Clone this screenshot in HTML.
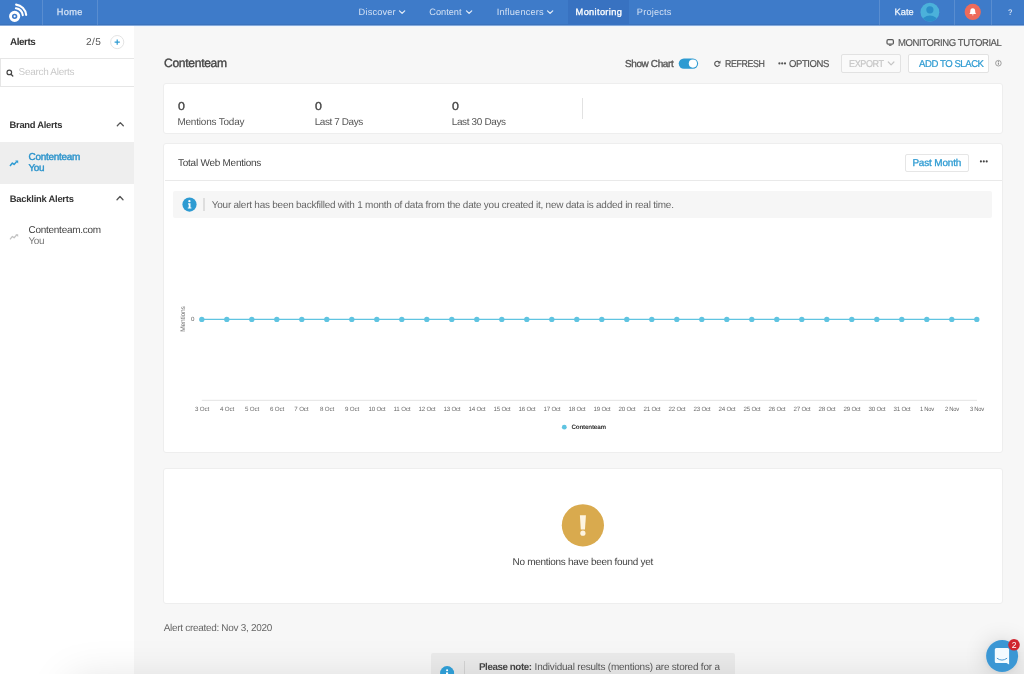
<!DOCTYPE html>
<html>
<head>
<meta charset="utf-8">
<title>Monitoring - Contenteam</title>
<style>
*{box-sizing:border-box;margin:0;padding:0}
html,body{width:1024px;height:674px;overflow:hidden;background:#f7f7f7;font-family:"Liberation Sans",sans-serif;color:#444}
.x{position:absolute;white-space:nowrap;line-height:1;font-family:"Liberation Sans",sans-serif;text-rendering:geometricPrecision}
.b{position:absolute}
#nav{left:0;top:0;width:1024px;height:25px;background:#3e7bc9;border-bottom:1px solid #3b73bc}
.sep{position:absolute;top:0;width:1.4px;height:25px;background:rgba(255,255,255,.14);margin-left:-.5px}
#navline{left:0;top:25px;width:1024px;height:1px;background:#85aadc}
#navline2{left:134px;top:26px;width:890px;height:1px;background:#eff6fc}
#side{left:0;top:26px;width:134px;height:648px;background:#fff}
.card{position:absolute;background:#fff;border:1px solid #eeeeee;border-radius:3px}
.btn{position:absolute;border:1px solid #e2e2e2;border-radius:2px;background:#fff}
#icons{position:absolute;left:0;top:0;width:1024px;height:674px}
#shade{left:70px;top:680px;width:1300px;height:200px;background:#ddd;box-shadow:0 0 40px rgba(0,0,0,.125)}
</style>
</head>
<body>
<div class="b" id="nav">
  <div class="sep" style="left:42px"></div>
  <div class="sep" style="left:97px"></div>
  <div class="b" style="left:567.5px;top:0;width:61.5px;height:25px;background:#3872c1"></div>
  <div class="sep" style="left:879px"></div>
  <div class="sep" style="left:954px"></div>
  <div class="sep" style="left:991px"></div>
</div>
<div class="b" id="navline"></div><div class="b" id="navline2"></div>
<div class="b" id="side">
  <div class="b" style="left:0;top:31.8px;width:134px;height:29.2px;border:1px solid #e6e6e6;border-right:0"></div>
  <div class="b" style="left:0;top:116px;width:134px;height:41.5px;background:#eeeeee"></div>
</div>

<div class="card" style="left:163px;top:82.6px;width:840px;height:51.2px"></div>
<div class="b" style="left:582px;top:98px;width:1px;height:20.5px;background:#e2e2e2"></div>

<div class="card" style="left:163px;top:143.2px;width:840px;height:310.2px"></div>
<div class="b" style="left:164.5px;top:179.6px;width:837.5px;height:1px;background:#e9e9e9"></div>
<div class="b" style="left:173.3px;top:190.7px;width:818.9px;height:27.8px;background:#f6f6f6;border-radius:2px"></div>
<div class="b" style="left:203.3px;top:197.8px;width:1.3px;height:13.4px;background:#dedede"></div>

<div class="card" style="left:163px;top:467.5px;width:840px;height:136.8px"></div>

<div class="btn" style="left:841.2px;top:54.4px;width:60px;height:19px;background:#fafafa"></div>
<div class="btn" style="left:908.4px;top:54.4px;width:80.3px;height:19px"></div>
<div class="btn" style="left:905.3px;top:153.8px;width:63.4px;height:18.2px;border-color:#e6e6e6"></div>

<div class="b" style="left:431px;top:652.6px;width:303.8px;height:30px;background:#ebebeb;border-radius:2px"></div>
<div class="b" style="left:464px;top:661px;width:1px;height:20px;background:#d4d4d4"></div>

<div class="b" id="shade"></div>
<div class="b" style="left:986.1px;top:640px;width:32px;height:32px;border-radius:50%;box-shadow:0 .7px 4px rgba(0,0,0,.06),0 1.4px 23px rgba(0,0,0,.16)"></div>

<div class="b" id="txt" style="left:0;top:0;width:1024px;height:674px;will-change:transform">
<span class="x" id="t0" style="left:56.70px;top:8.00px;font-size:9.24px;color:#d3e1f4;letter-spacing:0.320px;-webkit-text-stroke:.25px #d3e1f4;">Home</span>
<span class="x" id="t1" style="left:358.60px;top:8.00px;font-size:9.24px;color:#d3e1f4;letter-spacing:0.168px;">Discover</span>
<span class="x" id="t2" style="left:429.30px;top:8.00px;font-size:9.24px;color:#d3e1f4;letter-spacing:-0.031px;">Content</span>
<span class="x" id="t3" style="left:496.80px;top:8.00px;font-size:9.24px;color:#d3e1f4;letter-spacing:0.173px;">Influencers</span>
<span class="x" id="t4" style="left:575.60px;top:8.00px;font-size:9.24px;color:#ffffff;letter-spacing:0.342px;-webkit-text-stroke:.3px #fff;">Monitoring</span>
<span class="x" id="t5" style="left:636.80px;top:8.00px;font-size:9.24px;color:#d3e1f4;letter-spacing:0.177px;">Projects</span>
<span class="x" id="t6" style="left:894.50px;top:8.00px;font-size:9.24px;color:#eef4fb;letter-spacing:0.067px;-webkit-text-stroke:.25px #eef4fb;">Kate</span>
<span class="x" id="t7" style="left:1007.50px;top:8.00px;font-size:8.3px;color:#cfdef3;font-weight:700;transform:scaleX(0.8862);transform-origin:0 0;">?</span>
<span class="x" id="t8" style="left:164.00px;top:57.00px;font-size:12.1px;color:#444;letter-spacing:-0.310px;-webkit-text-stroke:.35px #444;">Contenteam</span>
<span class="x" id="t9" style="left:897.60px;top:39.00px;font-size:9.96px;color:#555;letter-spacing:-0.448px;transform:scaleX(0.9614);transform-origin:0 0;-webkit-text-stroke:.15px #555;">MONITORING TUTORIAL</span>
<span class="x" id="t10" style="left:625.00px;top:60.00px;font-size:9.96px;color:#555;letter-spacing:-0.368px;-webkit-text-stroke:.35px #555;">Show Chart</span>
<span class="x" id="t11" style="left:724.50px;top:60.00px;font-size:9.96px;color:#555;letter-spacing:-0.448px;transform:scaleX(0.8869);transform-origin:0 0;-webkit-text-stroke:.2px #555;">REFRESH</span>
<span class="x" id="t12" style="left:789.00px;top:60.00px;font-size:9.96px;color:#555;letter-spacing:-0.448px;transform:scaleX(0.9571);transform-origin:0 0;-webkit-text-stroke:.2px #555;">OPTIONS</span>
<span class="x" id="t13" style="left:849.00px;top:60.00px;font-size:9.96px;color:#c6c6c6;letter-spacing:-0.448px;transform:scaleX(0.9115);transform-origin:0 0;-webkit-text-stroke:.2px #c6c6c6;">EXPORT</span>
<span class="x" id="t14" style="left:918.50px;top:60.00px;font-size:9.96px;color:#2e9bd2;letter-spacing:-0.448px;transform:scaleX(0.9597);transform-origin:0 0;-webkit-text-stroke:.22px #2e9bd2;">ADD TO SLACK</span>
<span class="x" id="t15" style="left:178.00px;top:102.00px;font-size:11.4px;color:#444;transform:scaleX(1.0877);transform-origin:0 0;-webkit-text-stroke:.35px #444;">0</span>
<span class="x" id="t16" style="left:315.20px;top:102.00px;font-size:11.4px;color:#444;transform:scaleX(1.0877);transform-origin:0 0;-webkit-text-stroke:.35px #444;">0</span>
<span class="x" id="t17" style="left:451.70px;top:102.00px;font-size:11.4px;color:#444;transform:scaleX(1.0877);transform-origin:0 0;-webkit-text-stroke:.35px #444;">0</span>
<span class="x" id="t18" style="left:177.40px;top:118.00px;font-size:9.96px;color:#555;letter-spacing:-0.187px;">Mentions Today</span>
<span class="x" id="t19" style="left:314.72px;top:118.00px;font-size:9.96px;color:#555;letter-spacing:-0.406px;">Last 7 Days</span>
<span class="x" id="t20" style="left:451.70px;top:118.00px;font-size:9.96px;color:#555;letter-spacing:-0.336px;">Last 30 Days</span>
<span class="x" id="t21" style="left:178.00px;top:159.00px;font-size:9.96px;color:#444;letter-spacing:-0.231px;">Total Web Mentions</span>
<span class="x" id="t22" style="left:912.40px;top:159.00px;font-size:9.96px;color:#2e9bd2;letter-spacing:-0.162px;-webkit-text-stroke:.3px #2e9bd2;">Past Month</span>
<span class="x" id="t23" style="left:211.80px;top:201.00px;font-size:9.96px;color:#666;letter-spacing:-0.223px;">Your alert has been backfilled with 1 month of data from the date you created it, new data is added in real time.</span>
<span class="x" id="t24" style="left:191.00px;top:317.00px;font-size:6.2px;color:#666;">0</span>
<span class="x" id="t25" style="left:194.90px;top:407.00px;font-size:6.2px;color:#6a6a6a;letter-spacing:-0.124px;">3 Oct</span>
<span class="x" id="t26" style="left:219.90px;top:407.00px;font-size:6.2px;color:#6a6a6a;letter-spacing:-0.124px;">4 Oct</span>
<span class="x" id="t27" style="left:244.90px;top:407.00px;font-size:6.2px;color:#6a6a6a;letter-spacing:-0.124px;">5 Oct</span>
<span class="x" id="t28" style="left:269.90px;top:407.00px;font-size:6.2px;color:#6a6a6a;letter-spacing:-0.124px;">6 Oct</span>
<span class="x" id="t29" style="left:294.24px;top:407.00px;font-size:6.2px;color:#6a6a6a;letter-spacing:-0.124px;">7 Oct</span>
<span class="x" id="t30" style="left:319.90px;top:407.00px;font-size:6.2px;color:#6a6a6a;letter-spacing:-0.124px;">8 Oct</span>
<span class="x" id="t31" style="left:344.90px;top:407.00px;font-size:6.2px;color:#6a6a6a;letter-spacing:-0.124px;">9 Oct</span>
<span class="x" id="t32" style="left:368.55px;top:407.00px;font-size:6.2px;color:#6a6a6a;letter-spacing:-0.247px;">10 Oct</span>
<span class="x" id="t33" style="left:393.55px;top:407.00px;font-size:6.2px;color:#6a6a6a;letter-spacing:-0.156px;">11 Oct</span>
<span class="x" id="t34" style="left:418.55px;top:407.00px;font-size:6.2px;color:#6a6a6a;letter-spacing:-0.247px;">12 Oct</span>
<span class="x" id="t35" style="left:443.55px;top:407.00px;font-size:6.2px;color:#6a6a6a;letter-spacing:-0.247px;">13 Oct</span>
<span class="x" id="t36" style="left:468.55px;top:407.00px;font-size:6.2px;color:#6a6a6a;letter-spacing:-0.247px;">14 Oct</span>
<span class="x" id="t37" style="left:493.55px;top:407.00px;font-size:6.2px;color:#6a6a6a;letter-spacing:-0.247px;">15 Oct</span>
<span class="x" id="t38" style="left:518.55px;top:407.00px;font-size:6.2px;color:#6a6a6a;letter-spacing:-0.247px;">16 Oct</span>
<span class="x" id="t39" style="left:543.55px;top:407.00px;font-size:6.2px;color:#6a6a6a;letter-spacing:-0.247px;">17 Oct</span>
<span class="x" id="t40" style="left:568.55px;top:407.00px;font-size:6.2px;color:#6a6a6a;letter-spacing:-0.247px;">18 Oct</span>
<span class="x" id="t41" style="left:593.55px;top:407.00px;font-size:6.2px;color:#6a6a6a;letter-spacing:-0.247px;">19 Oct</span>
<span class="x" id="t42" style="left:618.55px;top:407.00px;font-size:6.2px;color:#6a6a6a;letter-spacing:-0.247px;">20 Oct</span>
<span class="x" id="t43" style="left:643.55px;top:407.00px;font-size:6.2px;color:#6a6a6a;letter-spacing:-0.247px;">21 Oct</span>
<span class="x" id="t44" style="left:668.55px;top:407.00px;font-size:6.2px;color:#6a6a6a;letter-spacing:-0.247px;">22 Oct</span>
<span class="x" id="t45" style="left:693.55px;top:407.00px;font-size:6.2px;color:#6a6a6a;letter-spacing:-0.247px;">23 Oct</span>
<span class="x" id="t46" style="left:718.55px;top:407.00px;font-size:6.2px;color:#6a6a6a;letter-spacing:-0.247px;">24 Oct</span>
<span class="x" id="t47" style="left:743.55px;top:407.00px;font-size:6.2px;color:#6a6a6a;letter-spacing:-0.247px;">25 Oct</span>
<span class="x" id="t48" style="left:768.55px;top:407.00px;font-size:6.2px;color:#6a6a6a;letter-spacing:-0.247px;">26 Oct</span>
<span class="x" id="t49" style="left:793.55px;top:407.00px;font-size:6.2px;color:#6a6a6a;letter-spacing:-0.247px;">27 Oct</span>
<span class="x" id="t50" style="left:818.55px;top:407.00px;font-size:6.2px;color:#6a6a6a;letter-spacing:-0.247px;">28 Oct</span>
<span class="x" id="t51" style="left:843.55px;top:407.00px;font-size:6.2px;color:#6a6a6a;letter-spacing:-0.247px;">29 Oct</span>
<span class="x" id="t52" style="left:868.55px;top:407.00px;font-size:6.2px;color:#6a6a6a;letter-spacing:-0.247px;">30 Oct</span>
<span class="x" id="t53" style="left:893.55px;top:407.00px;font-size:6.2px;color:#6a6a6a;letter-spacing:-0.247px;">31 Oct</span>
<span class="x" id="t54" style="left:919.90px;top:407.00px;font-size:6.2px;color:#6a6a6a;letter-spacing:-0.279px;transform:scaleX(0.9498);transform-origin:0 0;">1 Nov</span>
<span class="x" id="t55" style="left:944.90px;top:407.00px;font-size:6.2px;color:#6a6a6a;letter-spacing:-0.279px;transform:scaleX(0.9498);transform-origin:0 0;">2 Nov</span>
<span class="x" id="t56" style="left:969.90px;top:407.00px;font-size:6.2px;color:#6a6a6a;letter-spacing:-0.279px;transform:scaleX(0.9498);transform-origin:0 0;">3 Nov</span>
<span class="x" id="t57" style="left:571.40px;top:425.00px;font-size:6.3px;color:#333;font-weight:700;letter-spacing:-0.188px;">Contenteam</span>
<span class="x" id="t58" style="left:512.60px;top:558.00px;font-size:9.96px;color:#444;letter-spacing:-0.275px;">No mentions have been found yet</span>
<span class="x" id="t59" style="left:163.70px;top:624.00px;font-size:9.96px;color:#666;letter-spacing:-0.286px;">Alert created: Nov 3, 2020</span>
<span class="x" id="t60" style="left:479.40px;top:663.00px;font-size:9.96px;color:#444;font-weight:700;letter-spacing:-0.448px;transform:scaleX(0.9868);transform-origin:0 0;">Please note:</span>
<span class="x" id="t61" style="left:534.60px;top:663.00px;font-size:9.96px;color:#555;letter-spacing:-0.195px;">Individual results (mentions) are stored for a</span>
<span class="x" id="t62" style="left:9.60px;top:38.00px;font-size:9.96px;color:#333;font-weight:700;letter-spacing:-0.448px;transform:scaleX(0.9932);transform-origin:0 0;">Alerts</span>
<span class="x" id="t63" style="left:86.10px;top:38.00px;font-size:9.96px;color:#555;letter-spacing:0.448px;transform:scaleX(1.0108);transform-origin:0 0;">2/5</span>
<span class="x" id="t64" style="left:18.56px;top:68.00px;font-size:9.96px;color:#c9c9c9;letter-spacing:-0.275px;">Search Alerts</span>
<span class="x" id="t65" style="left:9.60px;top:120.00px;font-size:9.4px;color:#333;font-weight:700;letter-spacing:-0.284px;">Brand Alerts</span>
<span class="x" id="t66" style="left:28.50px;top:153.00px;font-size:9.96px;color:#2b93cb;letter-spacing:-0.270px;-webkit-text-stroke:.4px #2b93cb;">Contenteam</span>
<span class="x" id="t67" style="left:28.50px;top:164.00px;font-size:9.96px;color:#2b93cb;letter-spacing:-0.398px;-webkit-text-stroke:.4px #2b93cb;">You</span>
<span class="x" id="t68" style="left:9.80px;top:194.00px;font-size:9.4px;color:#333;font-weight:700;letter-spacing:-0.236px;">Backlink Alerts</span>
<span class="x" id="t69" style="left:28.50px;top:226.00px;font-size:9.96px;color:#444;letter-spacing:-0.246px;">Contenteam.com</span>
<span class="x" id="t70" style="left:28.50px;top:237.00px;font-size:9.96px;color:#777;letter-spacing:-0.398px;">You</span>
<span class="x" style="left:184.2px;top:319.3px;font-size:6.7px;color:#6e6e6e;transform:translate(-50%,-50%) rotate(-90deg);letter-spacing:-.2px">Mentions</span>
</div>

<svg id="icons" viewBox="0 0 1024 674">
  <!-- logo -->
  <g fill="none" stroke="#fff" stroke-linecap="round">
    <circle cx="14.65" cy="16.35" r="4.15" stroke-width="2.9"/>
    <circle cx="14.65" cy="16.35" r="1.1" fill="#fff" stroke="none"/>
    <path d="M15.9 8.3 A8.2 8.2 0 0 1 22.8 15.2" stroke-width="2.1"/>
    <path d="M16.1 4.6 A11.6 11.6 0 0 1 26.2 14.9" stroke-width="2.1"/>
  </g>
  <!-- nav chevrons -->
  <g fill="none" stroke="#e3ecf8" stroke-width="1.3" stroke-linecap="round" stroke-linejoin="round">
    <path d="M399.5 10.9 l2.6 2.5 l2.6 -2.5"/>
    <path d="M466.5 10.9 l2.6 2.5 l2.6 -2.5"/>
    <path d="M547.5 10.9 l2.6 2.5 l2.6 -2.5"/>
  </g>
  <!-- avatar -->
  <defs><clipPath id="av"><circle cx="929.9" cy="12.2" r="9.4"/></clipPath></defs>
  <circle cx="929.9" cy="12.2" r="9.4" fill="#4bb1da"/>
  <g clip-path="url(#av)" fill="#2c8ec9">
    <circle cx="929.9" cy="9.8" r="3.6"/>
    <ellipse cx="929.9" cy="22.2" rx="8.2" ry="6.6"/>
  </g>
  <!-- bell -->
  <circle cx="972.75" cy="11.9" r="8.1" fill="#ee6b5b"/>
  <path transform="translate(972.75 11.7) scale(.82) translate(-972.75 -11.4)" d="M972.75 7.3 c-2.1 0 -3 1.6 -3 3.4 c0 1.8 -.5 2.7 -1.2 3.4 h8.4 c-.7 -.7 -1.2 -1.6 -1.2 -3.4 c0 -1.8 -.9 -3.4 -3 -3.4z M971.7 14.8 a1.05 1.05 0 0 0 2.1 0z" fill="#fff"/>

  <!-- sidebar plus -->
  <circle cx="117.2" cy="42.1" r="6.6" fill="#fff" stroke="#e3e3e3" stroke-width="1"/>
  <path d="M114.6 42.1h5.2M117.2 39.5v5.2" stroke="#2e9bd2" stroke-width="1.2" fill="none"/>
  <!-- search icon -->
  <circle cx="9.3" cy="72.4" r="2.3" fill="none" stroke="#484848" stroke-width="1.2"/>
  <path d="M11 74.2l1.8 1.8" stroke="#484848" stroke-width="1.3" stroke-linecap="round"/>
  <!-- sidebar chevrons -->
  <g fill="none" stroke="#555" stroke-width="1.3" stroke-linecap="round" stroke-linejoin="round">
    <path d="M117.3 125.8l3 -3.2l3 3.2"/>
    <path d="M117 199.7l3 -3.2l3 3.2"/>
  </g>
  <!-- trend icons -->
  <path d="M10 166l2.4 -2.9l1.7 1.3l2.6 -2.8" fill="none" stroke="#2e9bd2" stroke-width="1.5" stroke-linejoin="round"/>
  <path d="M15.2 160.6h3v3z" fill="#2e9bd2"/>
  <path d="M10 239.3l2.4 -2.9l1.7 1.3l2.6 -2.8" fill="none" stroke="#c2c2c2" stroke-width="1.3" stroke-linejoin="round"/>
  <path d="M15.4 234.2h2.8v2.8z" fill="#c2c2c2"/>

  <!-- monitor icon -->
  <rect x="887" y="39.7" width="6.4" height="4.5" rx="1.2" fill="none" stroke="#5a5a5a" stroke-width="1.25"/>
  <path d="M888.9 45.4h2.6" stroke="#5a5a5a" stroke-width=".9"/>
  <!-- toggle -->
  <rect x="678.7" y="58.4" width="19.4" height="10.3" rx="5.15" fill="#2e9bd2"/>
  <circle cx="692.9" cy="63.55" r="4.1" fill="#fff"/>
  <!-- refresh -->
  <path d="M719.4 62.6a2.5 2.5 0 1 0 .1 2.2" fill="none" stroke="#555" stroke-width="1.15"/>
  <path d="M720.5 60.6v2.8h-2.8z" fill="#555"/>
  <!-- options dots -->
  <g fill="#555"><circle cx="779.4" cy="63.4" r="1.1"/><circle cx="782.2" cy="63.4" r="1.1"/><circle cx="785" cy="63.4" r="1.1"/></g>
  <!-- export chevron -->
  <path d="M888.3 62l2.8 2.8l2.8 -2.8" fill="none" stroke="#c6c6c6" stroke-width="1.2" stroke-linecap="round" stroke-linejoin="round"/>
  <!-- small info -->
  <circle cx="998.4" cy="63.2" r="2.8" fill="none" stroke="#8a8a8a" stroke-width=".8"/>
  <path d="M998.4 62.6v2.1" stroke="#777" stroke-width=".9"/><circle cx="998.4" cy="61.6" r=".5" fill="#777"/>
  <!-- card menu dots -->
  <g fill="#444"><circle cx="980.9" cy="161.4" r="1.05"/><circle cx="983.8" cy="161.4" r="1.05"/><circle cx="986.7" cy="161.4" r="1.05"/></g>

  <!-- banner info -->
  <circle cx="189.5" cy="204.6" r="7.1" fill="#2e9bd2"/>
  <path d="M188.1 203.3h2.4v4.2h.9v1.1h-3.6v-1.1h.9v-3.1h-.6z" fill="#fff"/><circle cx="189.4" cy="201.2" r="1.15" fill="#fff"/>

  <!-- chart -->
  <path d="M201.8 400.3H977" stroke="#e3e3e3" stroke-width="1"/>
  <path d="M201.8 319.4H976.8" stroke="#5fc4e1" stroke-width="1.3"/>
  <g fill="#5fc4e1" id="pts"><circle cx="201.8" cy="319.4" r="2.65"/><circle cx="226.8" cy="319.4" r="2.65"/><circle cx="251.8" cy="319.4" r="2.65"/><circle cx="276.8" cy="319.4" r="2.65"/><circle cx="301.8" cy="319.4" r="2.65"/><circle cx="326.8" cy="319.4" r="2.65"/><circle cx="351.8" cy="319.4" r="2.65"/><circle cx="376.8" cy="319.4" r="2.65"/><circle cx="401.8" cy="319.4" r="2.65"/><circle cx="426.8" cy="319.4" r="2.65"/><circle cx="451.8" cy="319.4" r="2.65"/><circle cx="476.8" cy="319.4" r="2.65"/><circle cx="501.8" cy="319.4" r="2.65"/><circle cx="526.8" cy="319.4" r="2.65"/><circle cx="551.8" cy="319.4" r="2.65"/><circle cx="576.8" cy="319.4" r="2.65"/><circle cx="601.8" cy="319.4" r="2.65"/><circle cx="626.8" cy="319.4" r="2.65"/><circle cx="651.8" cy="319.4" r="2.65"/><circle cx="676.8" cy="319.4" r="2.65"/><circle cx="701.8" cy="319.4" r="2.65"/><circle cx="726.8" cy="319.4" r="2.65"/><circle cx="751.8" cy="319.4" r="2.65"/><circle cx="776.8" cy="319.4" r="2.65"/><circle cx="801.8" cy="319.4" r="2.65"/><circle cx="826.8" cy="319.4" r="2.65"/><circle cx="851.8" cy="319.4" r="2.65"/><circle cx="876.8" cy="319.4" r="2.65"/><circle cx="901.8" cy="319.4" r="2.65"/><circle cx="926.8" cy="319.4" r="2.65"/><circle cx="951.8" cy="319.4" r="2.65"/><circle cx="976.8" cy="319.4" r="2.65"/></g>
  <circle cx="564.3" cy="427.2" r="2.4" fill="#5fc4e1"/>

  <!-- warning -->
  <circle cx="582.9" cy="525.3" r="21.1" fill="#d9aa4e"/>
  <path d="M579.9 515.2h6l-.9 14.4h-4.2z" fill="#fdf4e1"/>
  <circle cx="582.9" cy="533.2" r="2.6" fill="#fdf4e1"/>

  <!-- note info icon -->
  <circle cx="447.1" cy="673.1" r="7" fill="#2e9bd2"/>
  <circle cx="447.1" cy="670.3" r="1.05" fill="#fff"/><path d="M446 672.4h2.1v3h-2.1z" fill="#fff"/>

  <!-- chat widget -->
  <circle cx="1002.1" cy="656" r="16" fill="#3b97d4"/>
  <path d="M996.3 648.1h11.3a1.5 1.5 0 0 1 1.5 1.5v14.9l-2.6 -1.6h-10.2a1.5 1.5 0 0 1 -1.5 -1.5v-11.8a1.5 1.5 0 0 1 1.5 -1.5z" fill="#f3fbff"/>
  <path d="M997.2 658.4q4.8 3.6 9.6 0" fill="none" stroke="#3a8fcc" stroke-width=".9" stroke-linecap="round"/>
  <circle cx="1014" cy="644.8" r="5.8" fill="#d0242f"/>
</svg>
<div class="b" style="left:0;top:0;width:1024px;height:674px;will-change:transform"><span class="x" style="left:1011.7px;top:640.9px;font-size:8.6px;color:#fff">2</span></div>
</body>
</html>
